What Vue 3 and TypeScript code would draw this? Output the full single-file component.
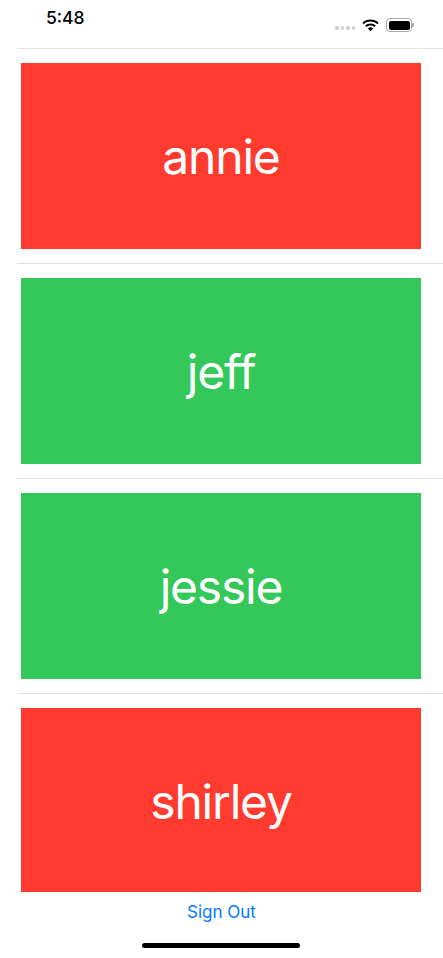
<script setup lang="ts">
interface Person { name: string; color: string }
const people: Person[] = [
  { name: 'annie', color: 'red' },
  { name: 'jeff', color: 'green' },
  { name: 'jessie', color: 'green' },
  { name: 'shirley', color: 'red' },
]
</script>

<template>
  <div class="screen">
    <header class="status">
      <span class="time">5:48</span>
      <div class="indicators">
        <span class="dots"><i></i><i></i><i></i><i></i></span>
        <svg class="wifi" width="17" height="13" viewBox="0.6 0.4 15.800 11.800">
          <path d="M8.5 2.6c2.4 0 4.6.9 6.3 2.5l1.3-1.4C14.1 1.8 11.4.7 8.5.7S2.900 1.800.9 3.700l1.300 1.400C3.900 3.500 6.100 2.600 8.500 2.600z" fill="#000"/>
          <path d="M8.500 6.300c1.400 0 2.700.5 3.700 1.500l1.300-1.400C12.200 5.100 10.400 4.400 8.500 4.400S4.800 5.100 3.500 6.400l1.300 1.400c1-1 2.300-1.500 3.700-1.500z" fill="#000"/>
          <path d="M8.500 8c-1 0-1.800.4-2.400 1l2.400 2.700L10.900 9C10.300 8.400 9.500 8 8.500 8z" fill="#000"/>
        </svg>
        <span class="battery"><span class="level"></span></span>
        <span class="cap"></span>
      </div>
    </header>
    <main class="list">
      <section v-for="p in people" :key="p.name" class="row">
        <div class="card" :class="p.color">{{ p.name }}</div>
      </section>
    </main>
    <footer class="footer">
      <a class="signout">Sign Out</a>
      <div class="home"></div>
    </footer>
  </div>
</template>

<style>
html, body { margin: 0; background: #fff; }
</style>

<style scoped>
.screen {
  width: 443px;
  height: 958px;
  overflow: hidden;
  display: flex;
  flex-direction: column;
  background: #fff;
  font-family: Inter, "Liberation Sans", sans-serif;
}
.status {
  height: 48px;
  flex: none;
  display: flex;
  justify-content: space-between;
  align-items: flex-start;
  padding: 0 29.500px 0 46px;
  box-sizing: border-box;
}
.time {
  margin-top: 7px;
  font-size: 17.500px;
  line-height: 21px;
  font-weight: 500;
  color: #000;
}
.indicators {
  margin-top: 18px;
  display: flex;
  align-items: center;
}
.dots { display: flex; gap: 2px; margin-top: 6px; margin-right: 7px; }
.dots i { width: 3.500px; height: 3.500px; border-radius: 50%; background: #cfcfcf; }
.wifi { margin-right: 7px; }
.battery {
  width: 26px;
  height: 14px;
  box-sizing: border-box;
  border: 1px solid #a8a8a8;
  border-radius: 4px;
  padding: 1.500px;
  display: flex;
}
.level { flex: 1; background: #000; border-radius: 2px; }
.cap { width: 1.500px; height: 4px; background: #a8a8a8; border-radius: 0 1px 1px 0; }
.list { flex: none; height: 844px; overflow: hidden; }
.row {
  height: 215px;
  box-sizing: border-box;
  margin-left: 17px;
  padding: 14px 22px 14px 4px;
  border-top: 1px solid #e2e2e4;
}
.card {
  height: 186px;
  display: flex;
  align-items: center;
  justify-content: center;
  color: #fff;
  font-size: 48px;
  font-weight: 400;
  letter-spacing: -1.200px;
}
.red { background: #ff3b30; }
.green { background: #34c759; }
.footer {
  flex: 1;
  display: flex;
  flex-direction: column;
  align-items: center;
}
.signout {
  margin-top: 9px;
  font-size: 17px;
  line-height: 22px;
  color: #007aff;
}
.home {
  margin-top: 20px;
  margin-right: 1px;
  width: 158px;
  height: 5px;
  border-radius: 3px;
  background: #000;
}
</style>
